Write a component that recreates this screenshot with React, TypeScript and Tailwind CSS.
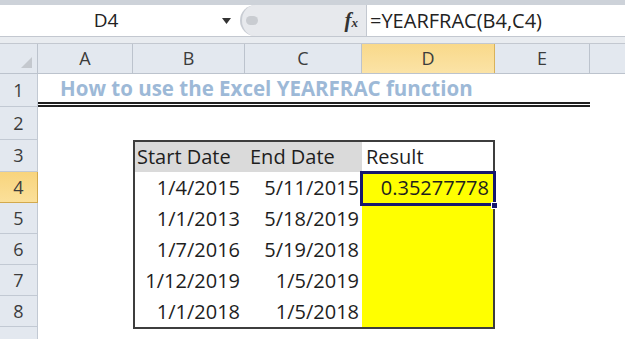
const font = "font-['Open_Sans',sans-serif]";

const columns = [
  { label: "A", w: "w-[95px]" },
  { label: "B", w: "w-[112px]" },
  { label: "C", w: "w-[117px]" },
  { label: "D", w: "w-[133px]", active: true },
  { label: "E", w: "w-[95px]" },
];

const rowHeights = ["h-[33px]", "h-[33px]", "h-[32px]", "h-[31px]", "h-[31px]", "h-[31px]", "h-[31px]", "h-[31px]", "h-[31px]"];

const data = [
  ["1/4/2015", "5/11/2015"],
  ["1/1/2013", "5/18/2019"],
  ["1/7/2016", "5/19/2018"],
  ["1/12/2019", "1/5/2019"],
  ["1/1/2018", "1/5/2018"],
];

function FormulaBar() {
  return (
    <div className="flex h-[32px] bg-white border-b border-[#c3c8d0]">
      <div className="w-[212px] flex items-center justify-center text-[19px] text-[#222]">D4</div>
      <div className="w-[28px] flex items-center justify-center">
        <svg width="9" height="6" viewBox="0 0 9 6">
          <path d="M0,0H9L4.5,6Z" fill="#333" />
        </svg>
      </div>
      <div className="w-[126px] flex items-center justify-between bg-[#e7e9ed] rounded-l-[16px] border-l-2 border-[#c8ccd3] pl-[4px] pr-[8px]">
        <div className="w-[12px] h-[9px] rounded-full bg-[#c9ccd1]" />
        <span className="font-['Liberation_Serif',serif] italic font-bold text-[21px] text-[#333] leading-none">
          f<span className="text-[13px]">x</span>
        </span>
      </div>
      <div className="flex-1 flex items-center pl-[3px] text-[20px] text-[#222] border-l border-[#c3c8d0]">
        =YEARFRAC(B4,C4)
      </div>
    </div>
  );
}

function ColumnHeaders() {
  return (
    <div className="flex h-[30px] bg-[#e3e8ef] border-b border-[#bcc3cd]">
      <div className="w-[38px] relative border-r border-[#bcc3cd]">
        <svg className="absolute right-[5px] bottom-[5px]" width="11" height="11" viewBox="0 0 11 11">
          <path d="M11,0V11H0Z" fill="#c4c8ce" />
        </svg>
      </div>
      {columns.map((c) => (
        <div
          key={c.label}
          className={`${c.w} flex items-center justify-center text-[18px] text-[#3c3c3c] border-r ${
            c.active
              ? "bg-gradient-to-b from-[#f9d98a] to-[#fbe3a6] border-[#d9b25a]"
              : "border-[#bcc3cd]"
          }`}
        >
          {c.label}
        </div>
      ))}
      <div className="flex-1" />
    </div>
  );
}

function RowHeaders() {
  return (
    <div className="w-[38px] flex flex-col">
      {rowHeights.map((h, i) => (
        <div
          key={i}
          className={`${h} flex items-center justify-center text-[18px] text-[#3c3c3c] border-r border-b ${
            i === 3
              ? "bg-gradient-to-b from-[#f8d47c] to-[#fbe09a] border-[#d2a94d]"
              : "bg-[#e3e8ef] border-[#c2c9d3]"
          }`}
        >
          {i < 8 ? i + 1 : ""}
        </div>
      ))}
    </div>
  );
}

function DataTable() {
  return (
    <div className="relative w-[362px] border-2 border-[#3d3d3d] grid grid-cols-[110px_117px_1fr] grid-rows-[30px_repeat(5,31px)] text-[20px] text-[#1e1e1e]">
      <div className="bg-[#dadada] flex items-center pl-[2px]">Start Date</div>
      <div className="bg-[#dadada] flex items-center pl-[5px]">End Date</div>
      <div className="bg-white flex items-center pl-[4px]">Result</div>
      {data.map((row, i) => (
        <div key={i} className="contents">
          <div className="flex items-center justify-end pr-[5px]">{row[0]}</div>
          <div className="flex items-center justify-end pr-[3px]">{row[1]}</div>
          <div className="bg-[#ffff00] flex items-center justify-end pr-[4px]">{i === 0 ? "0.35277778" : ""}</div>
        </div>
      ))}
      {/* selected cell D4 */}
      <div className="absolute left-[225px] top-[29px] w-[136px] h-[35px] border-[3px] border-[#17186e]" />
      <div className="absolute left-[356px] top-[60px] w-[7px] h-[7px] bg-[#17186e] border border-white" />
    </div>
  );
}

export default function App() {
  return (
    <div className={`w-[625px] h-[339px] overflow-hidden bg-white ${font}`}>
      <div className="h-[5px] bg-[#cdd2d9]" />
      <FormulaBar />
      <div className="h-[7px] bg-[#e9ecf0] border-b border-[#c3c8d0]" />
      <ColumnHeaders />
      <div className="flex">
        <RowHeaders />
        <div className="flex flex-col">
          <div className="h-[33px] w-[552px] flex items-center pl-[22px] border-b-[5px] border-double border-[#1f1f1f] text-[20.5px] font-bold text-[#9db9d7]">
            How to use the Excel YEARFRAC function
          </div>
          <div className="h-[33px]" />
          <div className="pl-[95px]">
            <DataTable />
          </div>
        </div>
      </div>
    </div>
  );
}
